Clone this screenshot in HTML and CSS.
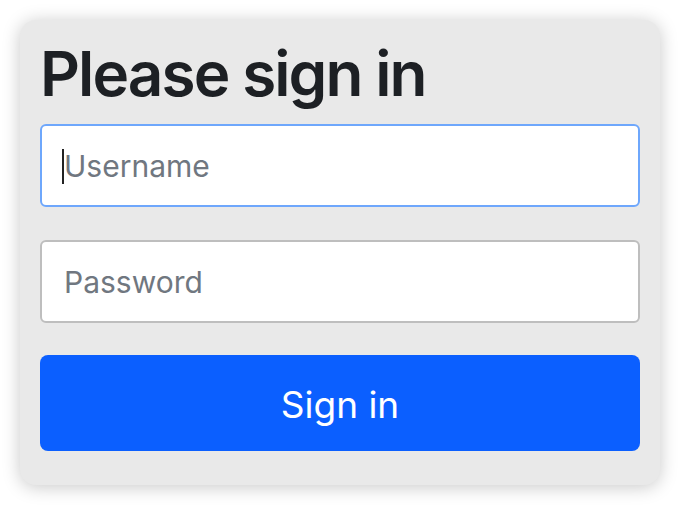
FILE: index.html
```html
<!DOCTYPE html>
<html lang="en">
<head>
  <meta charset="UTF-8">
  <meta name="viewport" content="width=device-width, initial-scale=1.0">
  <title>Please sign in</title>
  <link rel="stylesheet" href="styles.css">
</head>
<body>
  <form class="signin-card">
    <h2 class="signin-title">Please sign in</h2>

    <div class="field">
      <span class="caret"></span>
      <input class="form-input is-focused" type="text" placeholder="Username">
    </div>
    <div class="field">
      <input class="form-input" type="password" placeholder="Password">
    </div>

    <button type="button" class="signin-btn">Sign in</button>
  </form>
</body>
</html>
```

FILE: styles.css
```css
body {
  font-family: Inter, "Liberation Sans", Arial, sans-serif;
  background-color: #fff;
  margin: 0;
  padding: 20px;
}

.signin-card {
  width: 640px;
  height: 465px;
  box-sizing: border-box;
  background-color: #e9e9e9;
  border-radius: 16px;
  box-shadow: 0 2px 18px rgba(0, 0, 0, 0.22);
  padding: 16px 20px 34px;
  display: flex;
  flex-direction: column;
  gap: 33px;
}

.signin-title {
  margin: 0 0 -21px;
  font-size: 62px;
  line-height: 76px;
  font-weight: 600;
  color: #1d2024;
  letter-spacing: -1.9px;
}

.field {
  position: relative;
}

.form-input {
  display: block;
  width: 100%;
  height: 83px;
  box-sizing: border-box;
  padding: 0 22px;
  font-family: inherit;
  font-size: 30px;
  color: #212529;
  background: #fff;
  border: 2px solid #bebebe;
  border-radius: 6px;
  outline: none;
}

.form-input::placeholder {
  color: #707780;
}

.form-input.is-focused {
  border-color: #6ea7fc;
}

.caret {
  position: absolute;
  left: 22px;
  top: 25px;
  width: 2px;
  height: 35px;
  background: #222;
  z-index: 1;
}

.signin-btn {
  height: 96px;
  margin-top: -1px;
  padding-top: 4px;
  background-color: #0b5fff;
  color: #fff;
  font-family: inherit;
  font-size: 37px;
  border: none;
  border-radius: 8px;
  cursor: pointer;
}
```
